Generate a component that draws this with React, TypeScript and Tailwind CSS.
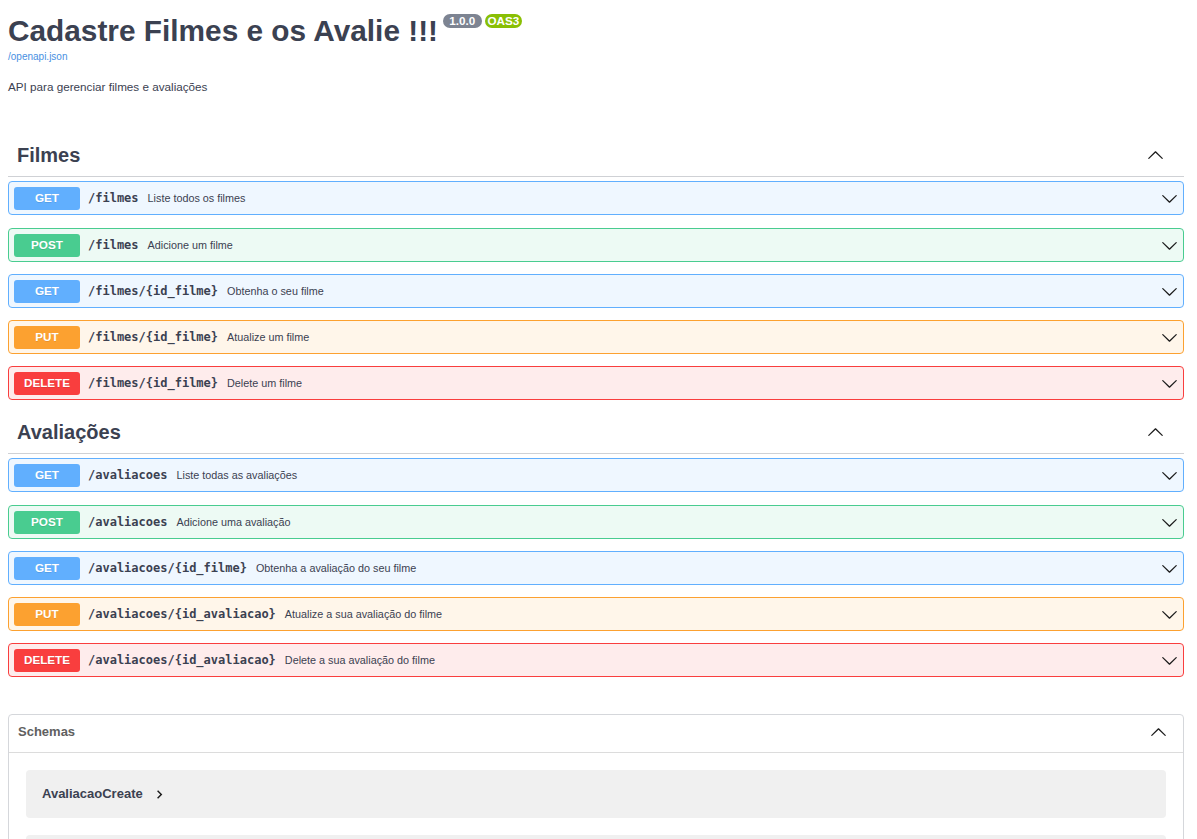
import React from 'react';

type Method = 'GET' | 'POST' | 'PUT' | 'DELETE';

const methodStyle: Record<Method, { row: string; badge: string }> = {
  GET: { row: 'bg-[#eff7ff] border-[#61affe]', badge: 'bg-[#61affe]' },
  POST: { row: 'bg-[#edfaf4] border-[#49cc90]', badge: 'bg-[#49cc90]' },
  PUT: { row: 'bg-[#fff6ea] border-[#fca130]', badge: 'bg-[#fca130]' },
  DELETE: { row: 'bg-[#feecec] border-[#f93e3e]', badge: 'bg-[#f93e3e]' },
};

const sections = [
  {
    name: 'Filmes',
    ops: [
      { method: 'GET' as Method, path: '/filmes', desc: 'Liste todos os filmes' },
      { method: 'POST' as Method, path: '/filmes', desc: 'Adicione um filme' },
      { method: 'GET' as Method, path: '/filmes/{id_filme}', desc: 'Obtenha o seu filme' },
      { method: 'PUT' as Method, path: '/filmes/{id_filme}', desc: 'Atualize um filme' },
      { method: 'DELETE' as Method, path: '/filmes/{id_filme}', desc: 'Delete um filme' },
    ],
  },
  {
    name: 'Avaliações',
    ops: [
      { method: 'GET' as Method, path: '/avaliacoes', desc: 'Liste todas as avaliações' },
      { method: 'POST' as Method, path: '/avaliacoes', desc: 'Adicione uma avaliação' },
      { method: 'GET' as Method, path: '/avaliacoes/{id_filme}', desc: 'Obtenha a avaliação do seu filme' },
      { method: 'PUT' as Method, path: '/avaliacoes/{id_avaliacao}', desc: 'Atualize a sua avaliação do filme' },
      { method: 'DELETE' as Method, path: '/avaliacoes/{id_avaliacao}', desc: 'Delete a sua avaliação do filme' },
    ],
  },
];

const models = ['AvaliacaoCreate', 'AvaliacaoUpdate', 'Filme', 'FilmeCreate', 'HTTPValidationError', 'ValidationError'];

// swagger-ui arrow
const Arrow = ({ up = false, className = '' }: { up?: boolean; className?: string }) => (
  <svg viewBox="0 0 20 20" className={`${className} ${up ? 'rotate-180' : ''}`} fill="#1b1b1b">
    <path d="M17.418 6.109c.272-.268.709-.268.979 0s.271.701 0 .969l-7.908 7.83c-.27.268-.707.268-.979 0l-7.908-7.83c-.27-.268-.27-.701 0-.969.271-.268.709-.268.979 0L10 13.25l7.418-7.141z" />
  </svg>
);

const OpRow = ({ method, path, desc, first }: { method: Method; path: string; desc: string; first: boolean }) => (
  <div className={`flex items-center h-[34px] border rounded-[4px] pl-[5px] pr-[5px] ${first ? 'mb-[13px]' : 'mb-[12px]'} ${methodStyle[method].row}`}>
    <span className={`w-[66px] h-[23px] rounded-[3px] flex items-center justify-center text-white font-bold text-[11.7px] [text-shadow:0_1px_0_rgba(0,0,0,0.1)] ${methodStyle[method].badge}`}>
      {method}
    </span>
    <span className="px-[8px] font-['DejaVu_Sans_Mono',monospace] font-semibold text-[12px] text-[#3b4151]">{path}</span>
    <span className="flex-1 pl-[1px] text-[10.8px] text-[#3b4151]">{desc}</span>
    <Arrow className="w-[17px] h-[17px]" />
  </div>
);

export default function App() {
  return (
    <div className="h-screen overflow-hidden bg-white font-['Liberation_Sans',Arial,sans-serif] text-[#3b4151] pl-2 pr-[13px]">
      {/* Info */}
      <div className="pt-4">
        <div className="flex items-start">
          <h2 className="text-[29.8px] leading-[30px] font-bold">Cadastre Filmes e os Avalie !!!</h2>
          <div className="flex gap-[3px] ml-[5px] -mt-[2px]">
            <span className="rounded-full bg-[#7d8492] px-[3px] h-[14px] leading-[14px] text-[11.7px] font-bold text-white whitespace-pre">{' 1.0.0 '}</span>
            <span className="rounded-full bg-[#89bf04] px-[3px] h-[14px] leading-[14px] text-[11.7px] font-bold text-white">OAS3</span>
          </div>
        </div>
        <a className="block mt-[5px] text-[10px] leading-[12px] text-[#4990e2]">/openapi.json</a>
        <p className="mt-[17px] text-[11.7px] leading-[14px]">API para gerenciar filmes e avaliações</p>
      </div>

      {/* Tags */}
      <div className="mt-[41px]">
        {sections.map(s => (
          <div key={s.name}>
            <h3 className="flex items-center justify-between border-b border-[#cfd1d5] pl-[9px] pt-[8px] pb-[9px] mb-[4px]">
              <span className="text-[20px] leading-[24px] font-bold">{s.name}</span>
              <Arrow up className="w-[17px] h-[17px] mr-[20px]" />
            </h3>
            {s.ops.map((op, i) => (
              <OpRow key={i} {...op} first={i === 0} />
            ))}
          </div>
        ))}
      </div>

      {/* Schemas */}
      <section className="mt-[37px] border border-[#d5d7db] rounded-[4px]">
        <h4 className="flex items-center justify-between h-[38px] border-b border-[#dcdcdc] pl-[9px] pr-[16px] pb-[3px] text-[13px] font-bold text-[#606060]">
          Schemas
          <Arrow up className="w-[17px] h-[17px]" />
        </h4>
        <div className="pt-[17px] px-[17px]">
          {models.map(m => (
            <div key={m} className="flex items-center h-[48px] mb-[17px] rounded-[4px] bg-[#f0f0f0] pl-[16px]">
              <span className="text-[13px] font-bold text-[#3b4151]">{m}</span>
              <svg viewBox="0 0 24 24" className="w-[17px] h-[17px] ml-[8px]" fill="#1b1b1b">
                <path d="M10 6L8.59 7.41 13.17 12l-4.58 4.59L10 18l6-6z" />
              </svg>
            </div>
          ))}
        </div>
      </section>
    </div>
  );
}
